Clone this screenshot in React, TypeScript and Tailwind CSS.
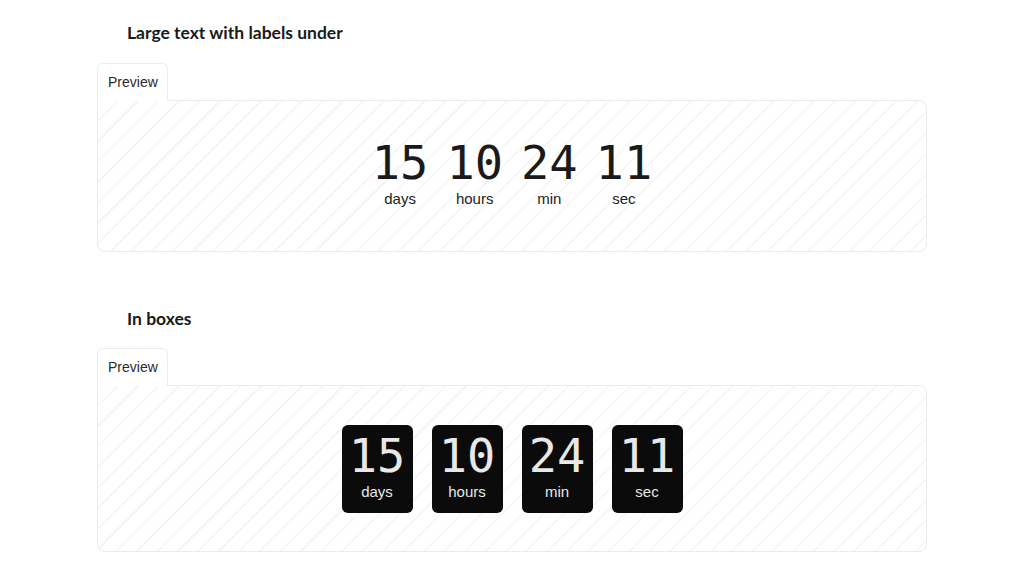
const units = [
  { value: 15, label: "days" },
  { value: 10, label: "hours" },
  { value: 24, label: "min" },
  { value: 11, label: "sec" },
]

const mono = "font-['DejaVu_Sans_Mono','Liberation_Mono',monospace]"
const label = "font-['Liberation_Sans',Arial,sans-serif] text-[15px]"

function Preview({ children, className }: { children: React.ReactNode; className: string }) {
  return (
    <div>
      <div className="flex">
        <div className="-mb-px h-[38px] w-[71px] rounded-t-md border border-b-0 border-[#ebebeb] bg-white pl-[10px] pt-[10px] text-[14px] leading-[17px] text-[#2a2a2a] font-['Liberation_Sans',Arial,sans-serif] relative z-10">
          Preview
        </div>
      </div>
      <div
        className={
          "rounded-b-lg rounded-tr-lg border border-[#ebebeb] bg-white bg-[repeating-linear-gradient(135deg,transparent_0px,transparent_13px,#f5f5f5_13px,#f5f5f5_14.5px)] flex items-center justify-center " +
          className
        }
      >
        {children}
      </div>
    </div>
  )
}

export default function App() {
  return (
    <div className="min-h-screen bg-white">
      <div className="ml-[97px] w-[830px] pt-[21px]">
        <h2 className="pl-[30px] text-[17.5px] leading-6 font-bold text-[#1a1a1a] font-['Lato',sans-serif] mb-[18px]">
          Large text with labels under
        </h2>
        <Preview className="h-[152px] pb-1">
          <div className="flex gap-[18px] text-center">
            {units.map((u) => (
              <div key={u.label} className="flex flex-col">
                <span className={mono + " text-[47px] leading-[47px] text-[#1a1a1a]"}>{u.value}</span>
                <span className={label + " mt-[3px] leading-5 text-[#222]"}>{u.label}</span>
              </div>
            ))}
          </div>
        </Preview>

        <h2 className="mt-[55px] pl-[30px] text-[17.5px] leading-6 font-bold text-[#1a1a1a] font-['Lato',sans-serif] mb-[17px]">
          In boxes
        </h2>
        <Preview className="h-[167px]">
          <div className="flex gap-[19px] text-center">
            {units.map((u) => (
              <div
                key={u.label}
                className="flex w-[71px] flex-col items-center rounded-md bg-[#0b0b0c] pt-[7px] pb-[11px] text-[#e8e8e8]"
              >
                <span className={mono + " text-[47px] leading-[47px]"}>{u.value}</span>
                <span className={label + " mt-[3px] leading-5"}>{u.label}</span>
              </div>
            ))}
          </div>
        </Preview>
      </div>
    </div>
  )
}
